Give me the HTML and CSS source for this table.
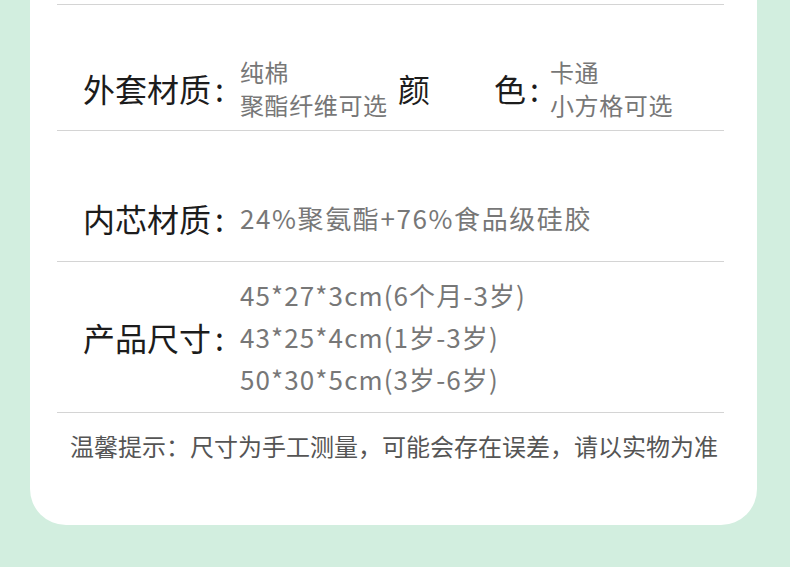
FILE: index.html
```html
<!DOCTYPE html>
<html lang="zh-CN">
<head>
  <meta charset="UTF-8" />
  <meta name="viewport" content="width=device-width, initial-scale=1" />
  <title>产品参数</title>
  <link rel="stylesheet" href="styles.css">
</head>
<body>
  <section class="card">
    <div class="row row-cover">
      <span class="label">外套材质<span class="colon">:</span></span>
      <div class="value value-half">
        <p>纯棉</p>
        <p>聚酯纤维可选</p>
      </div>
      <span class="label label-color">颜　　色<span class="colon">:</span></span>
      <div class="value">
        <p>卡通</p>
        <p>小方格可选</p>
      </div>
    </div>
    <div class="row row-core">
      <span class="label">内芯材质<span class="colon">:</span></span>
      <div class="value">
        <p>24%聚氨酯+76%食品级硅胶</p>
      </div>
    </div>
    <div class="row row-size">
      <span class="label">产品尺寸<span class="colon">:</span></span>
      <div class="value">
        <p>45*27*3cm(6个月-3岁)</p>
        <p>43*25*4cm(1岁-3岁)</p>
        <p>50*30*5cm(3岁-6岁)</p>
      </div>
    </div>
    <p class="note">温馨提示：尺寸为手工测量，可能会存在误差，请以实物为准</p>
  </section>
</body>
</html>
```

FILE: styles.css
```css
body {
  margin: 0;
  padding: 0 33px 42px 30px;
  background: #d2eedf;
  font-family: "Noto Sans CJK SC", "Noto Sans", sans-serif;
}
.card {
  background: #fff;
  border-radius: 0 0 36px 36px;
  padding: 4px 33px 62px 27px;
}
.row {
  display: flex;
  align-items: center;
  border-top: 1px solid #d4d4d4;
}
.label {
  width: 157px;
  flex-shrink: 0;
  padding-left: 26px;
  font-size: 32px;
  line-height: 40px;
  color: #1c1c1c;
  white-space: nowrap;
}
.colon {
  padding-left: 4px;
}
.label-color {
  width: 152px;
  padding-left: 0;
}
.value p {
  margin: 0;
  font-size: 24px;
  letter-spacing: 0.6px;
  color: #777;
  white-space: nowrap;
}
.value-half {
  width: 158px;
}
.row-cover {
  padding: 50px 0 9px;
}
.row-cover .value p {
  line-height: 33px;
}
.row-core {
  padding: 67px 0 23px;
}
.row-core .value p {
  font-size: 26px;
  letter-spacing: 1.6px;
  line-height: 40px;
}
.row-size {
  padding: 12px 0;
}
.row-size .value p {
  font-size: 26px;
  letter-spacing: 1.1px;
  line-height: 42px;
}
.note {
  margin: 0;
  border-top: 1px solid #d4d4d4;
  padding: 16px 0 0 13px;
  font-size: 24px;
  line-height: 34px;
  color: #555;
  white-space: nowrap;
}
```
